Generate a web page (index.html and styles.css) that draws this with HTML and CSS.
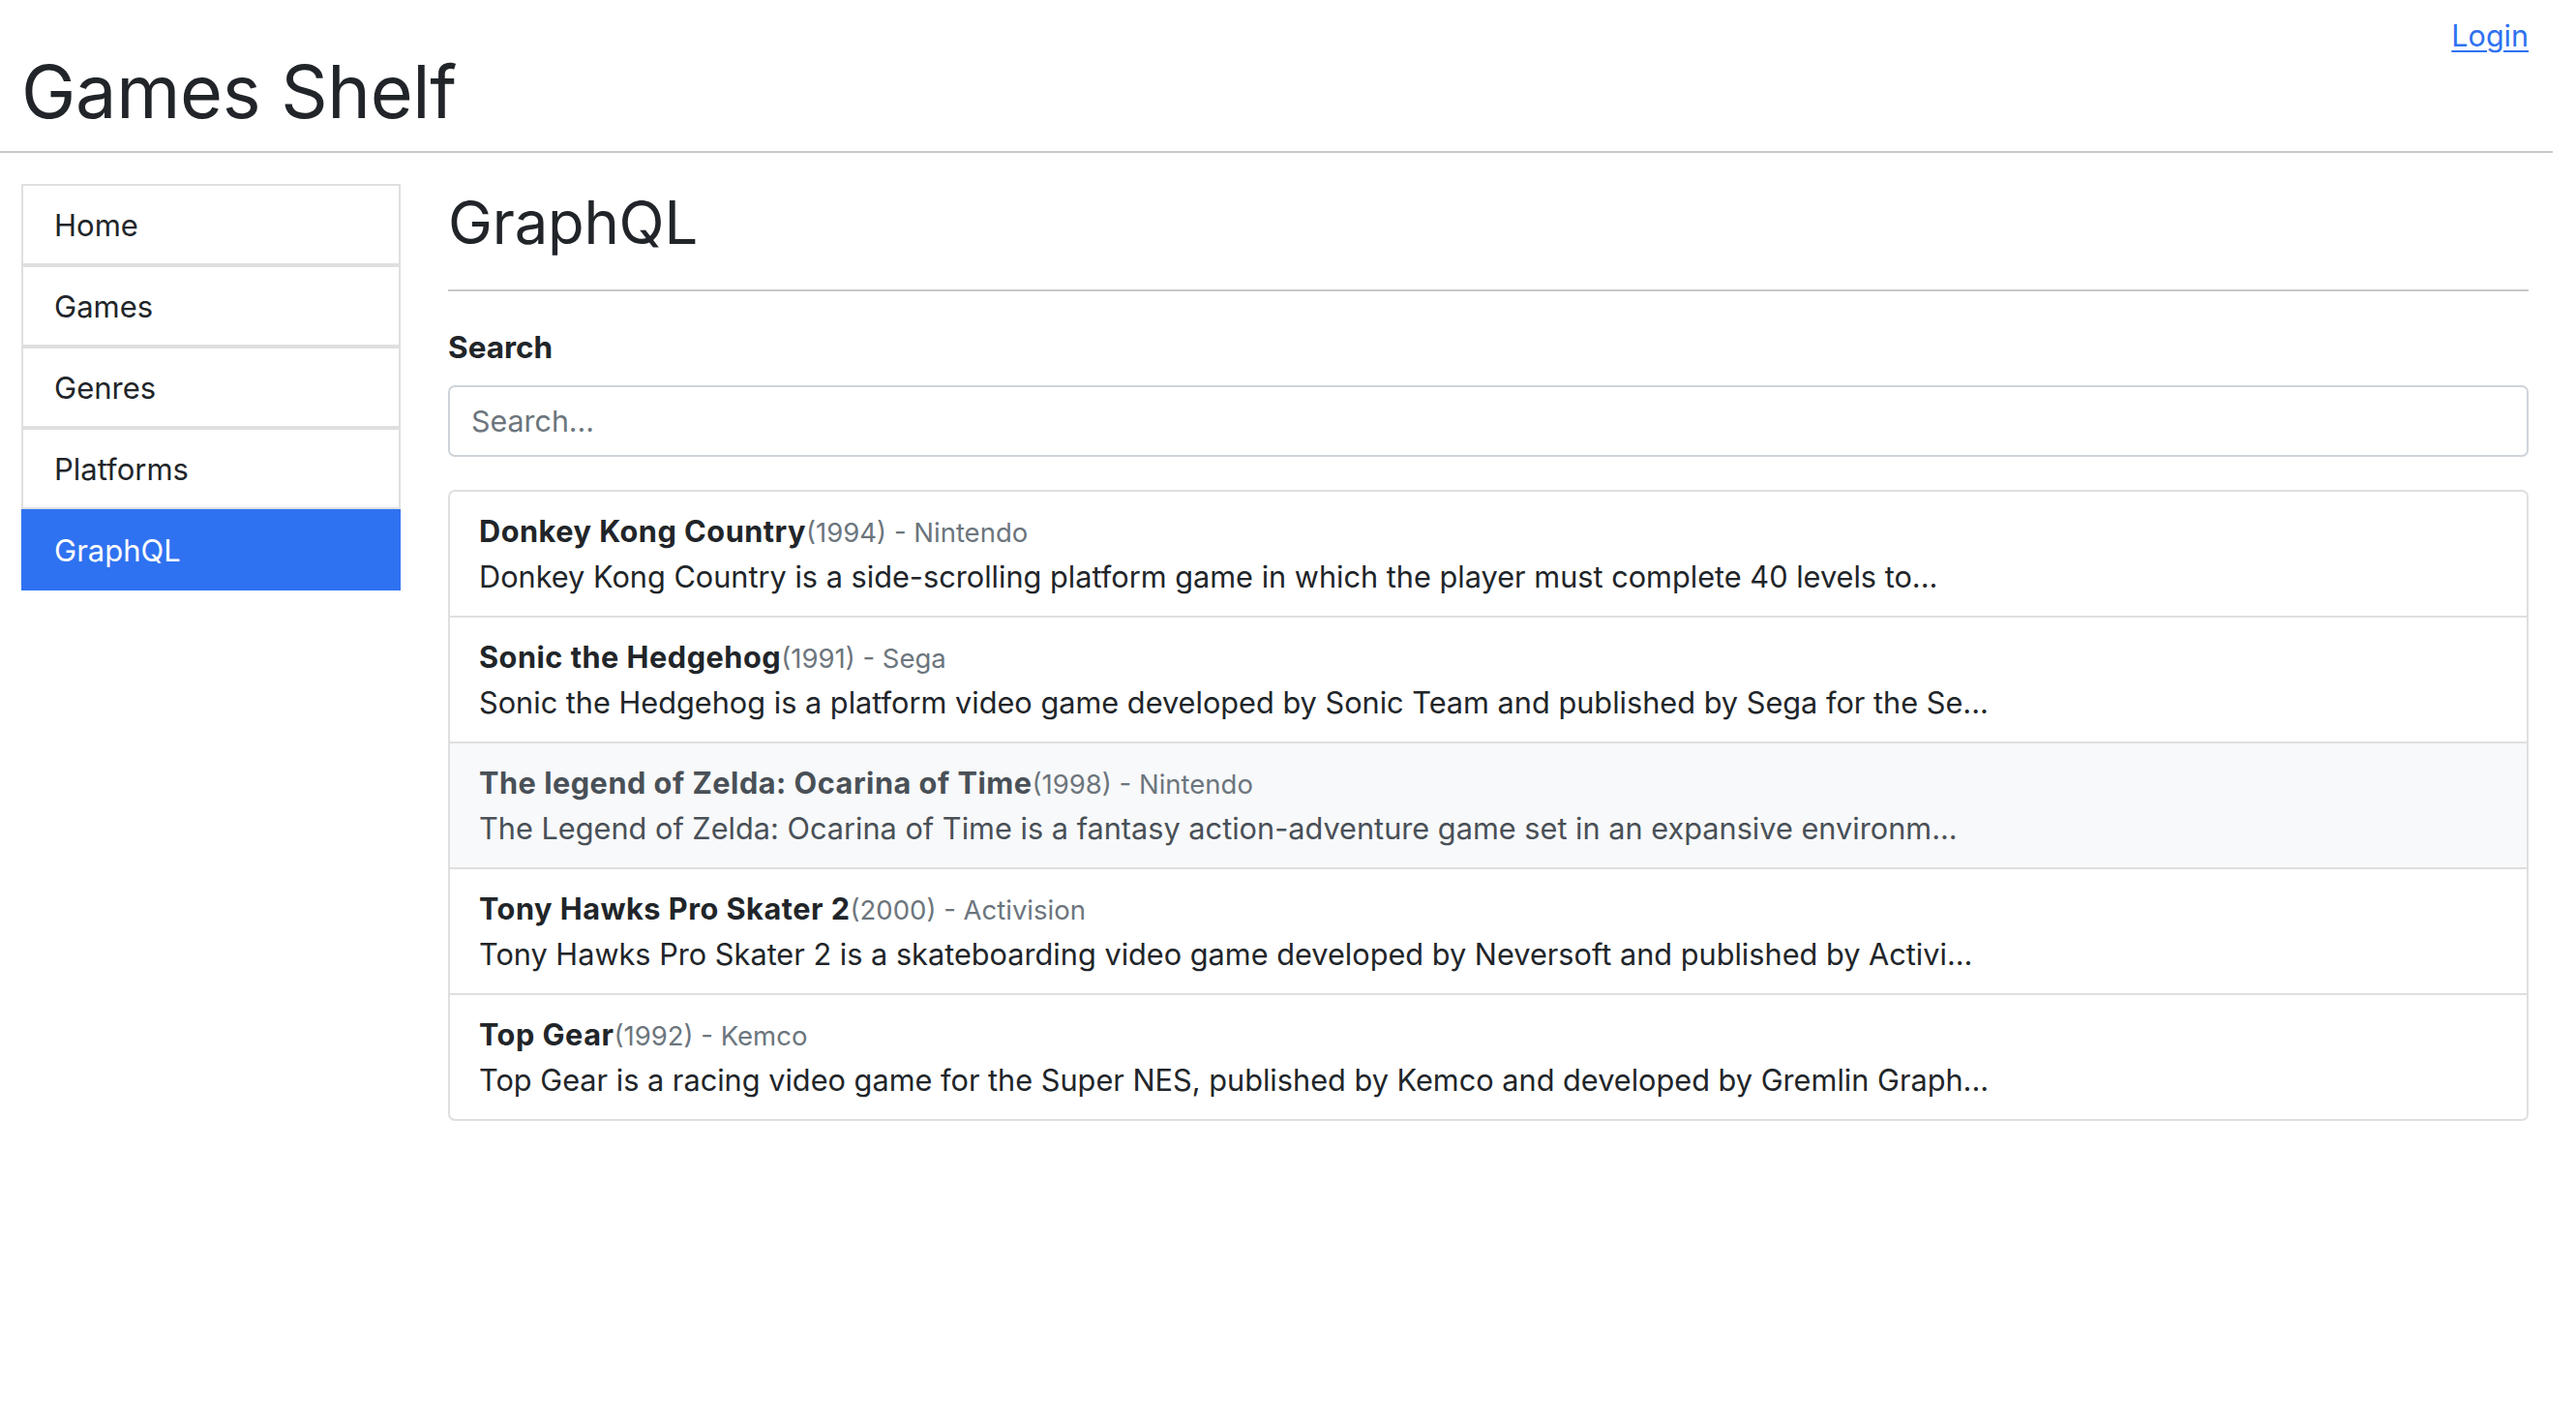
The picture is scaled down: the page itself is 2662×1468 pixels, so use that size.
FILE: index.html
```html
<!DOCTYPE html>
<html lang="en">
<head>
<meta charset="utf-8">
<title>Games Shelf</title>
<link rel="stylesheet" href="styles.css">
</head>
<body>
<header class="site-header">
  <div class="login-row"><a href="#" class="login">Login</a></div>
  <h1 class="site-title">Games Shelf</h1>
</header>
<div class="layout">
  <nav class="sidebar">
    <a href="#" class="nav-item">Home</a>
    <a href="#" class="nav-item">Games</a>
    <a href="#" class="nav-item">Genres</a>
    <a href="#" class="nav-item">Platforms</a>
    <a href="#" class="nav-item active">GraphQL</a>
  </nav>
  <main class="content">
    <h2 class="page-title">GraphQL</h2>
    <hr class="divider">
    <label class="search-label" for="search">Search</label>
    <input id="search" class="search-input" type="text" placeholder="Search...">
    <ul class="results">
      <li class="result">
        <div class="result-head"><strong class="result-name">Donkey Kong Country</strong><span class="result-meta">(1994) - Nintendo</span></div>
        <p class="result-desc">Donkey Kong Country is a side-scrolling platform game in which the player must complete 40 levels to...</p>
      </li>
      <li class="result">
        <div class="result-head"><strong class="result-name">Sonic the Hedgehog</strong><span class="result-meta">(1991) - Sega</span></div>
        <p class="result-desc">Sonic the Hedgehog is a platform video game developed by Sonic Team and published by Sega for the Se...</p>
      </li>
      <li class="result hovered">
        <div class="result-head"><strong class="result-name">The legend of Zelda: Ocarina of Time</strong><span class="result-meta">(1998) - Nintendo</span></div>
        <p class="result-desc">The Legend of Zelda: Ocarina of Time is a fantasy action-adventure game set in an expansive environm...</p>
      </li>
      <li class="result">
        <div class="result-head"><strong class="result-name">Tony Hawks Pro Skater 2</strong><span class="result-meta">(2000) - Activision</span></div>
        <p class="result-desc">Tony Hawks Pro Skater 2 is a skateboarding video game developed by Neversoft and published by Activi...</p>
      </li>
      <li class="result">
        <div class="result-head"><strong class="result-name">Top Gear</strong><span class="result-meta">(1992) - Kemco</span></div>
        <p class="result-desc">Top Gear is a racing video game for the Super NES, published by Kemco and developed by Gremlin Graph...</p>
      </li>
    </ul>
  </main>
</div>
</body>
</html>
```
FILE: styles.css
```css
html, body {
  margin: 0;
  padding: 0;
  background: #fff;
}

body {
  width: 2638px;
  font-family: Inter, "Liberation Sans", sans-serif;
  color: #212529;
}

.site-header {
  padding: 17px 25px 24px 22px;
  border-bottom: 2px solid #c8c8c8;
}

.login-row {
  display: flex;
  justify-content: flex-end;
  height: 40px;
  line-height: 40px;
}

.login {
  font-size: 30.5px;
  color: #2f72f1;
  text-decoration: underline;
  text-decoration-thickness: 2px;
  text-underline-offset: 4px;
}

.site-title {
  margin: 0;
  font-size: 75.5px;
  font-weight: 400;
  line-height: 75px;
  letter-spacing: -0.3px;
}

.layout {
  display: flex;
  align-items: flex-start;
  gap: 49px;
  padding: 32px 25px 0 22px;
}

.sidebar {
  flex: none;
  width: 392px;
  display: flex;
  flex-direction: column;
}

.nav-item {
  display: block;
  border: 2px solid #dfdfdf;
  padding: 18px 32px 16px;
  font-size: 31px;
  line-height: 46px;
  color: #212529;
  text-decoration: none;
}

.nav-item.active {
  background: #2f72f1;
  border-color: #2f72f1;
  color: #fff;
}

.content {
  flex: 1;
  min-width: 0;
}

.page-title {
  margin: 2px 0 0;
  font-size: 61.5px;
  font-weight: 400;
  line-height: 76px;
  letter-spacing: -0.2px;
}

.divider {
  margin: 31px 0 0;
  border: 0;
  border-top: 2px solid #c8c8c8;
}

.search-label {
  display: block;
  margin-top: 35px;
  font-size: 31.5px;
  font-weight: 700;
  line-height: 46px;
}

.search-input {
  display: block;
  box-sizing: border-box;
  width: 100%;
  height: 74px;
  margin: 16px 0 0;
  padding: 0 22px;
  border: 2px solid #ced4da;
  border-radius: 7px;
  font-family: Inter, "Liberation Sans", sans-serif;
  font-size: 30.4px;
  color: #495057;
  background: #fff;
}

.search-input::placeholder {
  color: #6c757d;
  opacity: 1;
}

.results {
  list-style: none;
  margin: 34px 0 0;
  padding: 0;
  border: 2px solid #dfdfdf;
  border-radius: 7px;
  overflow: hidden;
}

.result {
  padding: 18px 30px 17px;
  border-top: 2px solid #dfdfdf;
  font-size: 30.7px;
  line-height: 46px;
}

.result:first-child {
  border-top: 0;
}

.result.hovered {
  background: #f8f9fa;
  color: #495057;
}

.result-head {
  margin-bottom: 0;
}

.result-name {
  font-weight: 700;
  letter-spacing: 0.5px;
}

.result-meta {
  font-size: 27.5px;
  color: #6c757d;
}

.result-desc {
  margin: 0;
}
```
